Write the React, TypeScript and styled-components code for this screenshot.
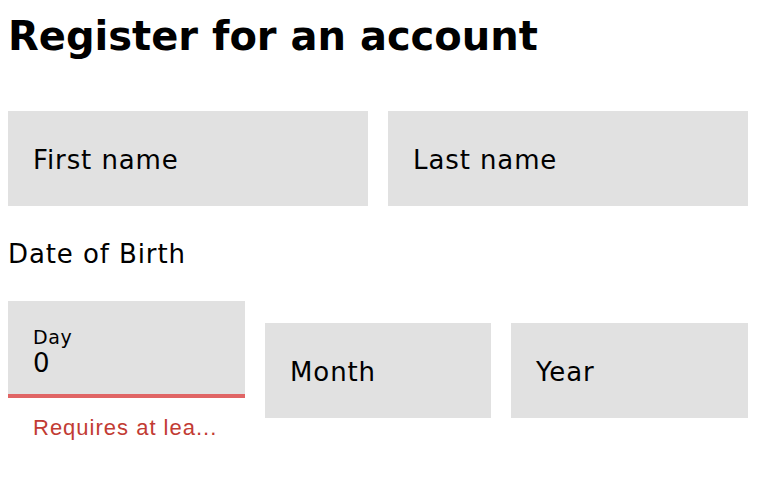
import React from "react";
import styled, { createGlobalStyle } from "styled-components";

const GlobalStyle = createGlobalStyle`
  html, body {
    margin: 0;
    padding: 0;
    background: #ffffff;
  }
  body {
    font-family: "DejaVu Sans", "Liberation Sans", sans-serif;
    color: #000000;
  }
`;

interface FieldProps {
  $invalid?: boolean;
}

const App: React.FC = () => {
  return (
    <>
      <GlobalStyle />
      <Page>
        <Title>Register for an account</Title>
        <NameRow>
          <Field>
            <FieldText>First name</FieldText>
          </Field>
          <Field>
            <FieldText>Last name</FieldText>
          </Field>
        </NameRow>
        <SectionLabel>Date of Birth</SectionLabel>
        <DobRow>
          <DayGroup>
            <FilledField $invalid>
              <SmallLabel>Day</SmallLabel>
              <Value>0</Value>
            </FilledField>
            <ErrorText>Requires at lea...</ErrorText>
          </DayGroup>
          <Field>
            <FieldText>Month</FieldText>
          </Field>
          <Field>
            <FieldText>Year</FieldText>
          </Field>
        </DobRow>
      </Page>
    </>
  );
};

export default App;

const Page = styled.div`
  width: 740px;
  padding: 12px 18px 0 8px;
`;

const Title = styled.h1`
  margin: 0;
  font-family: "DejaVu Sans", sans-serif;
  font-weight: bold;
  font-size: 40px;
  line-height: 48px;
  white-space: nowrap;
`;

const NameRow = styled.div`
  display: grid;
  grid-template-columns: 1fr 1fr;
  gap: 20px;
  margin-top: 51px;
`;

const Field = styled.div<FieldProps>`
  box-sizing: border-box;
  height: 95px;
  display: flex;
  align-items: center;
  padding: 2px 0 0 25px;
  background-color: #e1e1e1;
`;

const FilledField = styled.div<FieldProps>`
  box-sizing: border-box;
  height: 97px;
  padding: 26px 0 0 25px;
  background-color: #e1e1e1;
  border-bottom: 4px solid
    ${({ $invalid }) => ($invalid ? "#e06565" : "transparent")};
`;

const FieldText = styled.span`
  font-size: 26px;
  line-height: 30px;
  letter-spacing: 0.9px;
`;

const SectionLabel = styled.div`
  margin-top: 33px;
  font-size: 26px;
  line-height: 30px;
  letter-spacing: 0.9px;
`;

const DobRow = styled.div`
  display: grid;
  grid-template-columns: 237px 226px 237px;
  gap: 20px;
  align-items: center;
  margin-top: 32px;
`;

const DayGroup = styled.div`
  display: flex;
  flex-direction: column;
`;

const SmallLabel = styled.div`
  font-size: 19px;
  line-height: 20px;
  letter-spacing: 0.6px;
`;

const Value = styled.div`
  margin-top: 2px;
  font-size: 26px;
  line-height: 28px;
  letter-spacing: 0.9px;
`;

const ErrorText = styled.div`
  padding: 18px 0 0 25px;
  font-family: "Liberation Sans", Arial, sans-serif;
  font-size: 22px;
  line-height: 24px;
  letter-spacing: 1px;
  color: #c23b33;
  white-space: nowrap;
`;
